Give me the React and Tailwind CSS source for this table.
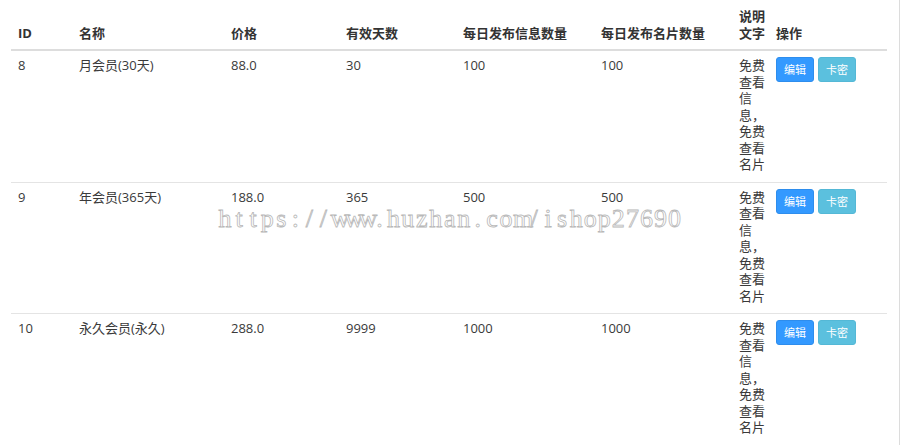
import React from 'react';

const rows = [
    { id: 8, name: '月会员(30天)', price: '88.0', days: '30', info: '100', card: '100' },
    { id: 9, name: '年会员(365天)', price: '188.0', days: '365', info: '500', card: '500' },
    { id: 10, name: '永久会员(永久)', price: '288.0', days: '9999', info: '1000', card: '1000' },
];

const font = { fontFamily: '"Open Sans", "Noto Sans CJK SC", sans-serif' };
const mark = 'https://www.huzhan.com/ishop27690';

const App = () => {
    return (
        <div className="relative w-full h-[445px] overflow-hidden bg-white border-r border-[#dcdcdc] text-[13px] text-[#3a3a3a]" style={font}>
            <table className="ml-[11px] w-[876px] table-fixed border-collapse leading-[16.5px]">
                <colgroup>
                    <col className="w-[60px]" />
                    <col className="w-[152px]" />
                    <col className="w-[115px]" />
                    <col className="w-[117px]" />
                    <col className="w-[138px]" />
                    <col className="w-[138px]" />
                    <col className="w-[37px]" />
                    <col className="w-[119px]" />
                </colgroup>
                <thead>
                    <tr className="border-b-2 border-[#dddddd] align-bottom text-left font-semibold text-[#333]">
                        <th className="px-[7px] pt-2 pb-[8px] font-bold">ID</th>
                        <th className="px-2 pt-2 pb-[8px]">名称</th>
                        <th className="px-2 pt-2 pb-[8px]">价格</th>
                        <th className="px-2 pt-2 pb-[8px]">有效天数</th>
                        <th className="px-2 pt-2 pb-[8px]">每日发布信息数量</th>
                        <th className="px-2 pt-2 pb-[8px]">每日发布名片数量</th>
                        <th className="pl-2 pr-0 pt-2 pb-[8px]">说明文字</th>
                        <th className="px-2 pt-2 pb-[8px]">操作</th>
                    </tr>
                </thead>
                <tbody>
                    {rows.map((r, idx) => (
                        <tr key={r.id} className={`align-top ${idx > 0 ? 'border-t border-[#e4e4e4]' : ''}`}>
                            <td className="px-[7px] pt-[6px] pb-[9px]">{r.id}</td>
                            <td className="px-2 pt-[6px] pb-[9px]">{r.name}</td>
                            <td className="px-2 pt-[6px] pb-[9px]">{r.price}</td>
                            <td className="px-2 pt-[6px] pb-[9px]">{r.days}</td>
                            <td className="px-2 pt-[6px] pb-[9px]">{r.info}</td>
                            <td className="px-2 pt-[6px] pb-[9px]">{r.card}</td>
                            <td className="pl-2 pr-0 pt-[6px] pb-[9px]">免费查看信息，免费查看名片</td>
                            <td className="px-2 pt-[6px] pb-[9px]">
                                <div className="flex gap-1">
                                    <button className="w-[38px] h-[25px] rounded-[3px] bg-[#3399ff] border border-[#2e8ded] text-white text-[11px] leading-none">编辑</button>
                                    <button className="w-[38px] h-[25px] rounded-[3px] bg-[#5bc0de] border border-[#54b8d6] text-white text-[11px] leading-none">卡密</button>
                                </div>
                            </td>
                        </tr>
                    ))}
                </tbody>
            </table>

            {/* 水印 */}
            <div
                className="absolute left-[218px] top-[206px] flex text-[26px] leading-none text-white pointer-events-none [-webkit-text-stroke:0.8px_#b8b8b8]"
                style={{ fontFamily: '"Liberation Serif", serif' }}
            >
                {mark.split('').map((c, i) => (
                    <span key={i} className="w-[14.06px] text-center">{c}</span>
                ))}
            </div>
        </div>
    );
};

export default App;
